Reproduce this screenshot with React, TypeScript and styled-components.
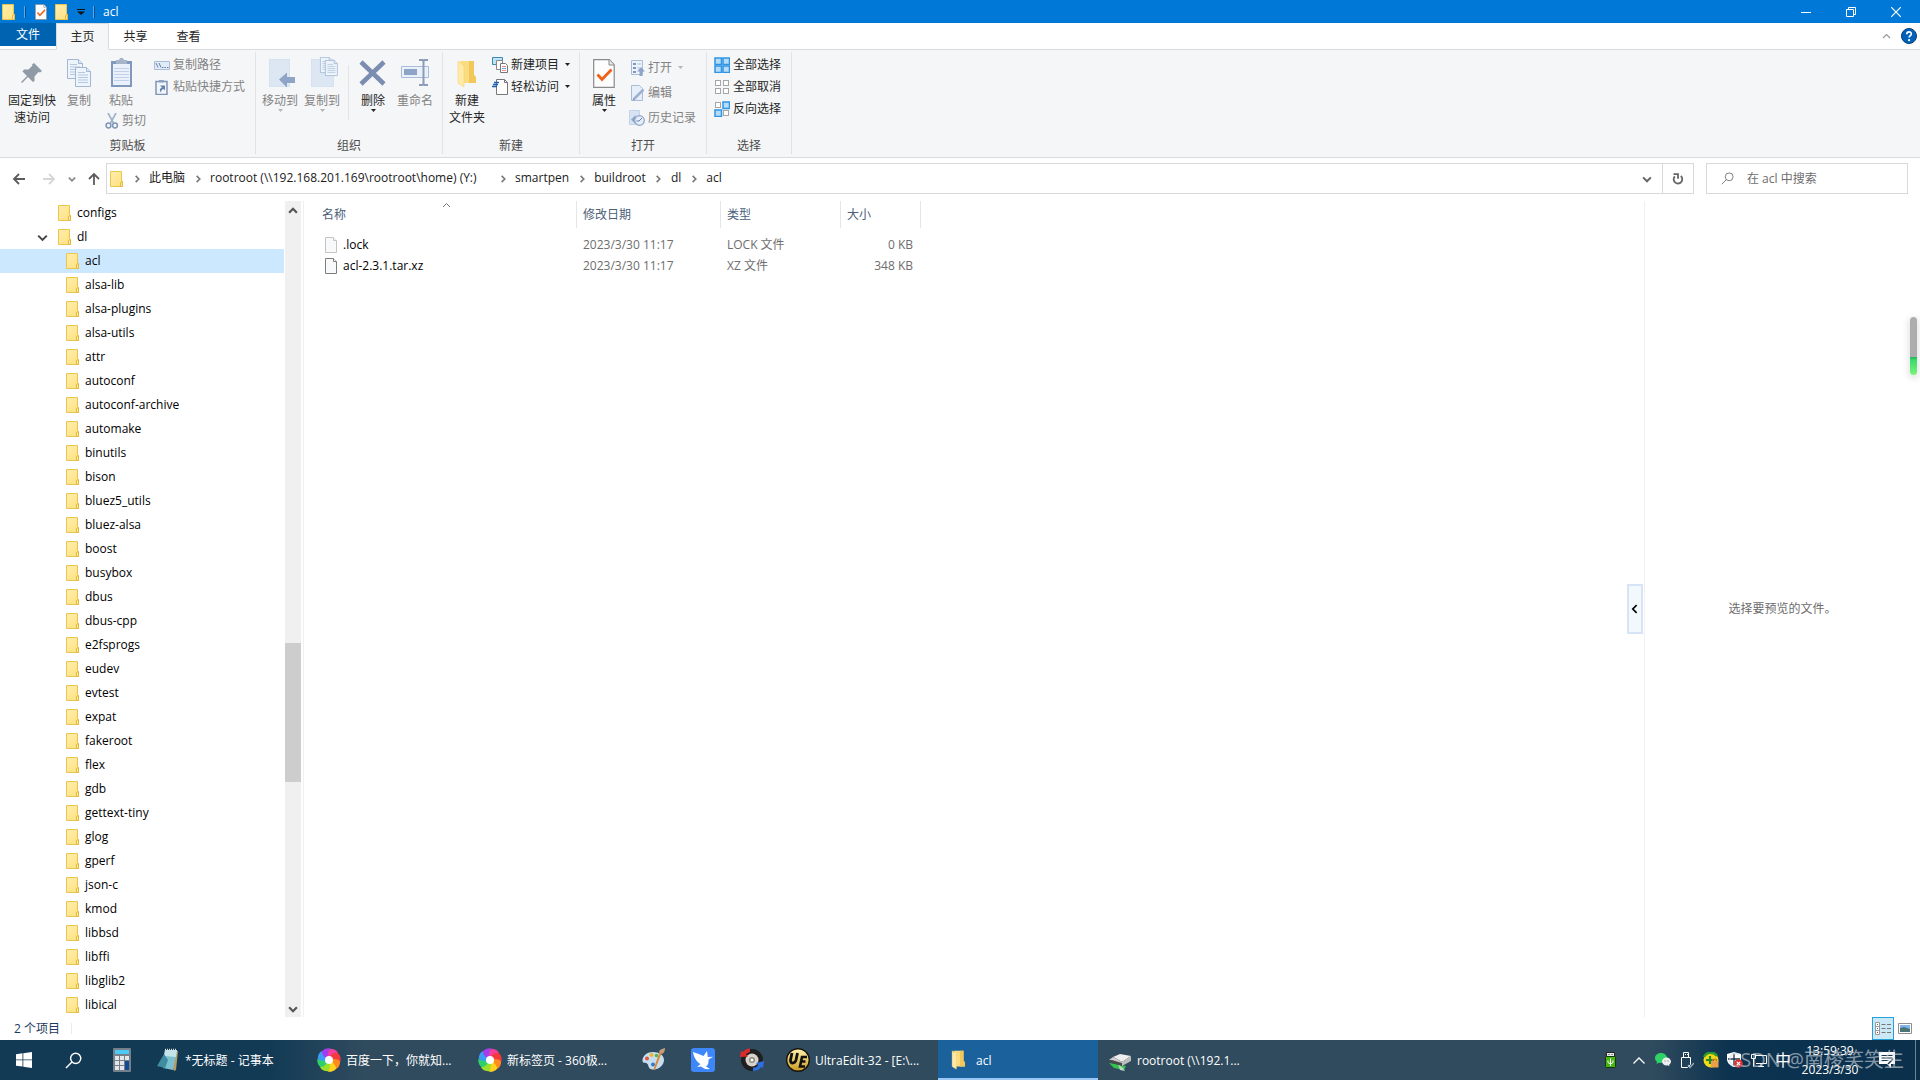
import React from "react";
import styled, { createGlobalStyle, css } from "styled-components";

const Global = createGlobalStyle`
  * { box-sizing: border-box; }
  body { margin: 0; background: #fff; }
  body, button, input {
    font-family: "Open Sans", "Noto Sans CJK SC", sans-serif;
    font-size: 12px;
    line-height: 17px;
    color: #1a1a1a;
  }
  button {
    margin: 0;
    padding: 0;
    border: 0;
    background: none;
    white-space: nowrap;
  }
  svg { display: block; flex: none; }
`;

const Window = styled.div`
  display: flex;
  flex-direction: column;
  height: 100vh;
  overflow: hidden;
`;

/* ---------- title bar ---------- */

const TitleBar = styled.header`
  display: flex;
  align-items: center;
  height: 23px;
  flex: none;
  padding: 0 2px;
  background: #0078d7;
  color: #fff;
`;

const QuickTools = styled.div`
  display: flex;
  align-items: center;
  gap: 8px;
  flex: 1;
`;

const QuickSep = styled.span<{ $gap?: number }>`
  width: 2px;
  height: 12px;
  margin-right: ${(p) => p.$gap ?? 0}px;
  border-left: 1px solid #5aa9e6;
  border-right: 1px solid #00509a;
`;

const Title = styled.span`
  color: #fff;
`;

const CaptionButton = styled.button`
  display: flex;
  align-items: center;
  justify-content: center;
  width: 45px;
  height: 23px;
`;

/* ---------- ribbon ---------- */

const TabBar = styled.nav`
  display: flex;
  height: 27px;
  flex: none;
  border-bottom: 1px solid #dadbdc;
`;

const FileTab = styled.button`
  width: 56px;
  height: 23px;
  background: #0063b1;
  color: #fff;
`;

const Tab = styled.button<{ $active?: boolean }>`
  width: 53px;
  height: 27px;
  color: #262626;
  ${(p) =>
    p.$active &&
    css`
      background: #f5f6f7;
      border: 1px solid #dadbdc;
      border-bottom-color: #f5f6f7;
    `}
`;

const TabEnd = styled.div`
  display: flex;
  align-items: center;
  gap: 10px;
  margin-left: auto;
  padding-right: 3px;
`;

const Ribbon = styled.section`
  display: flex;
  height: 108px;
  flex: none;
  padding: 2px 0 3px;
  background: #f5f6f7;
  border-bottom: 1px solid #dadbdc;
`;

const Group = styled.div<{ $w: number }>`
  display: flex;
  flex-direction: column;
  justify-content: space-between;
  width: ${(p) => p.$w}px;
  border-right: 1px solid #e2e3e4;
`;

const GroupBody = styled.div<{ $pad: number }>`
  display: flex;
  align-items: flex-start;
  padding: 4px 0 0 ${(p) => p.$pad}px;
`;

const GroupLabel = styled.div`
  text-align: center;
  color: #4d4d4d;
`;

const Big = styled.button<{ $w: number; $dim?: boolean }>`
  display: flex;
  flex-direction: column;
  align-items: center;
  width: ${(p) => p.$w}px;
  padding-top: 1px;
  white-space: normal;
  color: ${(p) => (p.$dim ? "#838383" : "#262626")};
  > svg:first-child { margin-bottom: 3px; }
`;

const Stack = styled.div<{ $top?: number; $gap: number; $left?: number }>`
  display: flex;
  flex-direction: column;
  align-items: flex-start;
  gap: ${(p) => p.$gap}px;
  padding: ${(p) => p.$top ?? 0}px 0 0 ${(p) => p.$left ?? 0}px;
`;

const Small = styled.button<{ $dim?: boolean }>`
  display: flex;
  align-items: center;
  gap: 3px;
  color: ${(p) => (p.$dim ? "#838383" : "#262626")};
  > svg:nth-of-type(2) { margin-left: 3px; }
`;

const InnerSep = styled.span`
  width: 1px;
  height: 55px;
  margin: 9px 3px 0 5px;
  background: #e2e3e4;
`;

/* ---------- address row ---------- */

const NavRow = styled.div`
  display: flex;
  align-items: center;
  height: 43px;
  flex: none;
  padding: 0 12px 2px 0;
`;

const NavButton = styled.button<{ $w: number }>`
  display: flex;
  justify-content: center;
  width: ${(p) => p.$w}px;
`;

const Address = styled.div`
  display: flex;
  align-items: center;
  flex: 1;
  height: 31px;
  margin-left: 2px;
  padding-left: 3px;
  border: 1px solid #d9d9d9;
`;

const Crumb = styled.button<{ $drive?: boolean }>`
  min-width: ${(p) => (p.$drive ? "280px" : "0")};
  padding-bottom: 2px;
  text-align: left;
  color: #1a1a1a;
`;

const CrumbSep = styled.span`
  display: flex;
  justify-content: center;
  width: 25px;
`;

const AddressButton = styled.button<{ $line?: boolean }>`
  display: flex;
  align-items: center;
  justify-content: center;
  width: 31px;
  height: 29px;
  border-left: ${(p) => (p.$line ? "1px solid #d9d9d9" : "0")};
`;

const Fill = styled.span`
  flex: 1;
`;

const Search = styled.label`
  display: flex;
  align-items: center;
  gap: 13px;
  width: 202px;
  height: 31px;
  margin-left: 12px;
  padding-left: 14px;
  border: 1px solid #d9d9d9;
  input {
    min-width: 0;
    flex: 1;
    padding: 0;
    border: 0;
    outline: 0;
    background: none;
  }
  input::placeholder { color: #6d6d6d; opacity: 1; }
`;

/* ---------- main area ---------- */

const Main = styled.main`
  display: flex;
  flex: 1;
  min-height: 0;
`;

const Tree = styled.ul`
  flex: none;
  width: 285px;
  margin: 0;
  padding: 0 1px 0 0;
  overflow: hidden;
  list-style: none;
`;

const TreeRow = styled.button<{ $depth: number; $selected?: boolean }>`
  display: flex;
  align-items: center;
  gap: 5px;
  width: 100%;
  height: 24px;
  padding-left: ${(p) => 37 + p.$depth * 8}px;
  background: ${(p) => (p.$selected ? "#cce8ff" : "transparent")};
  color: #000;
`;

const Twist = styled.span`
  width: 16px;
`;

const TreeLabel = styled.span`
  padding-bottom: 2px;
`;

const ScrollBar = styled.div`
  display: flex;
  flex-direction: column;
  align-items: center;
  flex: none;
  width: 16px;
  padding: 5px 0 3px;
  background: #f0f0f0;
`;

const ScrollTrack = styled.div`
  display: grid;
  grid-template-rows: 427fr 139fr 222fr;
  flex: 1;
  width: 100%;
`;

const Thumb = styled.div`
  grid-row: 2;
  background: #cdcdcd;
`;

const ListPane = styled.section`
  flex: 1;
  margin-left: 2px;
  padding-left: 12px;
  border-left: 1px solid #f0f0f0;
  display: flex;
  justify-content: space-between;
`;

const Files = styled.table`
  align-self: flex-start;
  table-layout: fixed;
  width: 605px;
  border-collapse: separate;
  border-spacing: 0;
  color: #6d6d6d;
  th {
    position: relative;
    height: 27px;
    padding: 0 6px;
    border-right: 1px solid #e5e5e5;
    font-weight: 400;
    text-align: left;
    color: #4c607a;
  }
  tbody::before { content: ""; display: block; height: 6px; }
  td { height: 21px; padding: 0 6px; white-space: nowrap; }
  td:last-child { padding-right: 8px; text-align: right; }
`;

const SortMark = styled.span`
  position: absolute;
  top: 0;
  left: 50%;
  margin-left: -4px;
`;

const FileName = styled.span`
  display: flex;
  align-items: center;
  gap: 6px;
  padding-left: 3px;
  color: #000;
`;

const Expander = styled.button`
  align-self: center;
  display: flex;
  align-items: center;
  justify-content: center;
  width: 16px;
  height: 50px;
  margin: 0 1px 0 0;
  border: 2px solid #d5e5f5;
  background: #f3f8fd;
`;

const Preview = styled.aside`
  position: relative;
  display: flex;
  align-items: center;
  justify-content: center;
  flex: none;
  width: 276px;
  padding-bottom: 2px;
  border-left: 1px solid #f0f0f0;
  color: #6d6d6d;
`;

const Meter = styled.div`
  position: absolute;
  top: 116px;
  right: 3px;
  width: 7px;
  height: 58px;
  border-radius: 4px;
  background: linear-gradient(#adadad 40px, #22b455 40px, #3cd96e 43px, #7bf47b);
  box-shadow: 0 2px 6px 2px #e6e6e6;
`;

const StatusBar = styled.footer`
  display: flex;
  align-items: center;
  height: 23px;
  flex: none;
  padding: 0 4px 0 14px;
  color: #1e395b;
`;

const StatusSep = styled.span`
  width: 1px;
  height: 11px;
  margin-left: 11px;
  background: #ececec;
`;

const ViewButton = styled.button<{ $on?: boolean }>`
  display: flex;
  align-items: center;
  justify-content: center;
  width: 22px;
  height: 23px;
  border: ${(p) => (p.$on ? "1px solid #26a0da" : "0")};
  background: ${(p) => (p.$on ? "#cbe8f6" : "none")};
`;

/* ---------- taskbar ---------- */

const TaskBar = styled.footer`
  position: relative;
  display: flex;
  gap: 1px;
  height: 40px;
  flex: none;
  background: linear-gradient(90deg, #123a55 0, #123a55 14%, #304b5e 19%, #304b5e 86%, #0c3350 90%, #0a304c 100%);
`;

const PinButton = styled.button`
  display: flex;
  align-items: center;
  justify-content: center;
  width: 48px;
`;

const Task = styled.button<{ $active?: boolean }>`
  display: flex;
  align-items: center;
  gap: 5px;
  width: 160px;
  padding: 0 0 0 ${(p) => (p.$active ? 8 : 9)}px;
  color: #fff;
  background: ${(p) => (p.$active ? "#1b629c" : "none")} linear-gradient(#99c8f5, #99c8f5) no-repeat bottom /
    ${(p) => (p.$active ? "160px" : "152px")} 2px;
`;

const Tray = styled.div`
  display: flex;
  align-items: center;
  margin-left: auto;
  padding-right: 4px;
`;

const TrayButton = styled.button<{ $w?: number; $size?: number }>`
  display: flex;
  align-items: center;
  justify-content: center;
  width: ${(p) => p.$w ?? 24}px;
  height: 40px;
  font-size: ${(p) => p.$size ?? 12}px;
  color: #fff;
`;

const Clock = styled.button`
  width: 70px;
  line-height: 19px;
  color: #fff;
`;

const DesktopEdge = styled.span`
  width: 1px;
  height: 40px;
  margin-left: 6px;
  background: #6d8494;
`;

const Watermark = styled.span`
  position: absolute;
  right: 16px;
  top: 6px;
  font-size: 20px;
  line-height: 28px;
  color: rgba(215, 220, 225, 0.6);
  pointer-events: none;
`;

/* ---------- drawings ---------- */

const Folder = () => (
  <svg width="14" height="16" viewBox="0 0 14 16">
    <defs>
      <linearGradient id="fold" x1="0" y1="0" x2="1" y2="1">
        <stop offset="0" stopColor="#ffeeb0" />
        <stop offset="1" stopColor="#ffe07c" />
      </linearGradient>
    </defs>
    <path d="M.5.5h11v10h1v5H.5z" fill="url(#fold)" stroke="#eac54f" />
    <path d="M10.500 15.500v-4l2-1v5z" fill="#ffe9a2" stroke="#e5b93c" />
  </svg>
);

const OpenFolder = ({ w = 20, h = 28 }: { w?: number; h?: number }) => (
  <svg width={w} height={h} viewBox="0 0 20 28">
    <path d="M3 1h14v14l2 2v6H5z" fill="#fbdc80" />
    <path d="M12 1h5v14l2 2v6h-7z" fill="#f2c75c" />
    <path d="M1 1l6 5v21l-6-4z" fill="#ffeaa8" stroke="#f3cf6d" strokeWidth=".5" />
  </svg>
);

const CheckDoc = ({ w, h }: { w: number; h: number }) => (
  <svg width={w} height={h} viewBox="0 0 22 29">
    <path d="M.7.7h15.500l5 5v22.600H.7z" fill="#fdfdfd" stroke="#8a8a8a" strokeWidth="1.200" />
    <path d="M16 .7v5.300h5" fill="#e8e8e8" stroke="#8a8a8a" />
    <path d="M4.500 15.500l4.500 5 9.500-10" fill="none" stroke="#f2611a" strokeWidth="2.800" />
  </svg>
);

const Chevron = ({ dir, size = 8, color = "#666", weight = 1.5 }: { dir: "up" | "down" | "right" | "left"; size?: number; color?: string; weight?: number }) => {
  const d = { up: "M1 6l3.500-3.500L8 6", down: "M1 3l3.500 3.500L8 3", right: "M3 1l3.500 3.500L3 8", left: "M6 1L2.500 4.500 6 8" }[dir];
  return (
    <svg width={size} height={size} viewBox="0 0 9 9">
      <path d={d} fill="none" stroke={color} strokeWidth={weight} />
    </svg>
  );
};

const Caret = ({ color = "#222" }: { color?: string }) => (
  <svg width="5" height="3" viewBox="0 0 5 3">
    <path d="M0 0h5L2.500 3z" fill={color} />
  </svg>
);

const Pin = () => (
  <svg width="32" height="32" viewBox="0 0 32 32">
    <path d="M18 6l8 8-2 1.500-1.500-.5-4 4.500v4.500l-1.500 1-5-5L6 26l-1-1 6-6-4.500-4.500 1.500-2h4.500l4-4-.5-1z" fill="#8e9ba6" />
  </svg>
);

const PageLines = ({ x, y, s = 1 }: { x: number; y: number; s?: number }) => (
  <g transform={`translate(${x} ${y}) scale(${s})`}>
    <path d="M.5.5h11l4 4v15H.5z" fill="#eef4fb" stroke="#a3b7d3" />
    <path d="M11.500.5v4h4" fill="#dce8f6" stroke="#a3b7d3" />
    <path d="M3 5.500h7M3 8h10M3 10.500h10M3 13h10M3 15.500h10" stroke="#b4c7e0" />
  </g>
);

const CopyIcon = () => (
  <svg width="32" height="32" viewBox="0 0 32 32">
    <PageLines x={4} y={2} />
    <PageLines x={12} y={10} />
  </svg>
);

const PasteIcon = () => (
  <svg width="32" height="32" viewBox="0 0 32 32">
    <path d="M6 4h21v26H6z" fill="#8198bd" />
    <path d="M8 7h17v21H8z" fill="#eaf1fa" />
    <path d="M11 3h3l1-2h3l1 2h3v4H11z" fill="#a5b4c9" />
    <path d="M9 11.500h15M9 14.500h15M9 17.500h15M9 20.500h15M9 23.500h15" stroke="#c0d2ea" />
  </svg>
);

const ScissorsIcon = () => (
  <svg width="14" height="16" viewBox="0 0 14 16">
    <path d="M3 0l5.500 10M11 0L5.500 10" stroke="#9db0ca" strokeWidth="1.600" />
    <circle cx="3.500" cy="12.500" r="2.400" fill="none" stroke="#7f95b8" strokeWidth="1.500" />
    <circle cx="10" cy="12.500" r="2.400" fill="none" stroke="#7f95b8" strokeWidth="1.500" />
  </svg>
);

const PathIcon = () => (
  <svg width="16" height="16" viewBox="0 0 16 16">
    <path d="M.5 4.500h15v8H.5z" fill="#e2ecf8" stroke="#a9bcd8" />
    <path d="M2 6l2 4.500M5 6l2 4.500" stroke="#6682ab" />
    <path d="M8 10.500h1.500M10.500 10.500H12M13 10.500h1.500" stroke="#6682ab" />
  </svg>
);

const ShortcutIcon = () => (
  <svg width="16" height="16" viewBox="0 0 16 16">
    <path d="M2 2.500h11v13H2z" fill="#f2f6fb" stroke="#7f95b8" strokeWidth="1.500" />
    <path d="M5 1h5v2.500H5z" fill="#8ea2c0" />
    <path d="M6 6.500h5v5L9.500 10C7.500 10.500 7 12 7 13.500 5 11 6 9 8 8.500z" fill="#6682ab" />
  </svg>
);

const MoveIcon = () => (
  <svg width="32" height="32" viewBox="0 0 32 32">
    <path d="M5 2h21v28H5z" fill="#d7e2f1" />
    <path d="M6 3h19v26H6z" fill="#dde7f4" />
    <path d="M15 22.500l8-7v4.500h8v6h-8v4.500z" fill="#8fa5c5" />
  </svg>
);

const CopyToIcon = () => (
  <svg width="32" height="32" viewBox="0 0 32 32">
    <path d="M5 2h23v28H5z" fill="#d7e2f1" />
    <path d="M6 3h21v26H6z" fill="#dde7f4" />
    <PageLines x={14} y={0} s={0.8} />
    <PageLines x={19} y={3} s={0.8} />
  </svg>
);

const DeleteIcon = () => (
  <svg width="32" height="32" viewBox="0 0 32 32">
    <path d="M4 5l23 22M27 5L4 27" stroke="#7b8db0" strokeWidth="4.500" />
  </svg>
);

const RenameIcon = () => (
  <svg width="32" height="32" viewBox="0 0 32 32">
    <path d="M2.500 9.500h27v11h-27z" fill="#eaf1fa" stroke="#a9bcd8" />
    <path d="M5 12h13v6H5z" fill="#8ea5c8" />
    <path d="M24.500 4v24M20 3h3.500l1 1 1-1H29M20 28h3.500l1-1 1 1H29" fill="none" stroke="#8b9cb8" strokeWidth="2" />
  </svg>
);

const NewItemIcon = () => (
  <svg width="16" height="16" viewBox="0 0 16 16">
    <path d="M.5.5h10v7H.5z" fill="#bfe3f3" stroke="#3c8bb0" />
    <path d="M4.500 3.500h6v9h-6z" fill="#fff" stroke="#888" />
    <path d="M8.500 6.500h5l2 2v7h-7z" fill="#fff" stroke="#777" />
    <path d="M10 9.500h4M10 13.500h4" stroke="#e48a8a" />
    <path d="M10 11.500h4" stroke="#7aa7dd" />
  </svg>
);

const EasyAccessIcon = () => (
  <svg width="16" height="16" viewBox="0 0 16 16">
    <path d="M4.500.5h8l3 3v12h-11z" fill="#fff" stroke="#777" />
    <path d="M12.500.5v3h3" fill="none" stroke="#777" />
    <path d="M2 3.500h5M1 5.500h5M0 7.500h5" stroke="#1d63ad" strokeWidth="1.300" />
  </svg>
);

const OpenIcon = () => (
  <svg width="16" height="16" viewBox="0 0 16 16">
    <path d="M2.500.5h11v14h-11z" fill="#edf3fb" stroke="#a9bcd8" />
    <path d="M4 3h3v2H4zM4 7h3v2H4zM4 11h3v2H4z" fill="#7f98bf" />
    <path d="M8.500 4H12M8.500 8H11" stroke="#a9bcd8" />
    <path d="M12 7l4 4.500h-2.500V16h-3v-4.500H8z" fill="#8ea5c8" />
  </svg>
);

const EditIcon = () => (
  <svg width="16" height="16" viewBox="0 0 16 16">
    <path d="M2.500.5h8l3 3v12h-11z" fill="#e6eef9" stroke="#a9bcd8" />
    <path d="M14.500 4.500l-9 9" stroke="#9db2d2" strokeWidth="2.500" />
    <path d="M3.500 15.500l1-3 2 2z" fill="#7f95b8" />
  </svg>
);

const HistoryIcon = () => (
  <svg width="16" height="16" viewBox="0 0 16 16">
    <path d="M.5.5h10v14H.500z" fill="#d7e3f3" stroke="#c3d2e8" />
    <path d="M2 9.500L6.500 5v9z" fill="#8ea5c8" />
    <circle cx="10.500" cy="10.500" r="4.800" fill="#e4ecf6" stroke="#8ea5c8" strokeWidth="1.200" />
    <path d="M10 11l3-3M10 11H7.500" stroke="#6682ab" />
  </svg>
);

const SelectIcon = ({ on }: { on: boolean[] }) => (
  <svg width="16" height="16" viewBox="0 0 16 16">
    {[[1, 1], [9, 1], [1, 9], [9, 9]].map(([x, y], i) =>
      on[i] ? (
        <rect key={i} x={x} y={y} width="6.500" height="6.500" fill="#b5dcf8" stroke="#2e94e4" strokeWidth="1.500" />
      ) : (
        <rect key={i} x={x + 0.5} y={y + 0.5} width="5" height="5" fill="#fff" stroke="#a6a6a6" />
      )
    )}
  </svg>
);

const Arrow = ({ color, up }: { color: string; up?: boolean }) => (
  <svg width="14" height="14" viewBox="0 0 14 14">
    <path d={up ? "M7 13V2M2 7l5-5 5 5" : "M13 7H2M7 2L2 7l5 5"} fill="none" stroke={color} strokeWidth="1.800" />
  </svg>
);

const ForwardArrow = () => (
  <svg width="14" height="14" viewBox="0 0 14 14">
    <path d="M1 7h11M7 2l5 5-5 5" fill="none" stroke="#d6d6d6" strokeWidth="1.800" />
  </svg>
);

const Refresh = () => (
  <svg width="12" height="12" viewBox="0 0 12 12">
    <path d="M8.800 3A4.300 4.300 0 1 1 2.800 3.300" fill="none" stroke="#666" strokeWidth="1.800" />
    <path d="M1.500 1.200h4.500v4.500" fill="none" stroke="#666" strokeWidth="1.800" />
  </svg>
);

const Lens = ({ size, color, w = 1 }: { size: number; color: string; w?: number }) => (
  <svg width={size} height={size} viewBox="0 0 14 14">
    <circle cx="8.800" cy="5.200" r="4.200" fill="none" stroke={color} strokeWidth={w} />
    <path d="M5.700 8.300L.8 13.200" stroke={color} strokeWidth={w} />
  </svg>
);

const PageIcon = ({ faded }: { faded?: boolean }) => (
  <svg width="12" height="16" viewBox="0 0 12 16">
    <path d="M.5.5h8l3 3v12H.5z" fill="#f8f9fa" stroke={faded ? "#c4c4c4" : "#7d7d7d"} />
    <path d="M8.500.5v3h3" fill="#fff" stroke={faded ? "#c4c4c4" : "#7d7d7d"} />
  </svg>
);

const Help = () => (
  <svg width="16" height="16" viewBox="0 0 16 16">
    <circle cx="8" cy="8" r="7.500" fill="#0063b9" stroke="#0b3c74" />
    <path d="M5.800 6.200c0-3.200 4.600-3 4.500-.3 0 1.700-2.200 1.700-2.200 3.700" fill="none" stroke="#fff" strokeWidth="1.700" />
    <circle cx="8.100" cy="12.200" r="1.100" fill="#fff" />
  </svg>
);

const DetailsIcon = () => (
  <svg width="17" height="13" viewBox="0 0 17 13">
    <path d="M.5.5h4v12h-4zM.5 4.500h4M.5 8.500h4" fill="#fff" stroke="#9a9a9a" />
    <path d="M2 2h1v1H2z" fill="#2c8a4b" />
    <path d="M2 6h1v1H2z" fill="#2c62c9" />
    <path d="M2 10h1v1H2z" fill="#d42a2a" />
    <path d="M6.500 2.500h4M12 2.500h4M6.500 6.500h4M12 6.500h4M6.500 10.500h4M12 10.500h4" stroke="#777" />
  </svg>
);

const ThumbsIcon = () => (
  <svg width="14" height="11" viewBox="0 0 14 11">
    <path d="M.5.5h13v10H.5z" fill="#fff" stroke="#8f8f8f" />
    <path d="M2 2h10v4H2z" fill="#7fb4f0" />
    <path d="M2 5l4-1 6 2v3H2z" fill="#4b7474" />
  </svg>
);

const WinLogo = () => (
  <svg width="16" height="16" viewBox="0 0 16 16">
    <path d="M0 2.200L6.500 1.300v6.200H0zM7.300 1.200L16 0v7.500H7.300zM0 8.300h6.500v6.300L0 13.700zM7.300 8.300H16V16l-8.700-1.200z" fill="#fff" />
  </svg>
);

const CalcIcon = () => (
  <svg width="18" height="24" viewBox="0 0 18 24">
    <rect width="18" height="24" rx="1" fill="#75808a" />
    <path d="M2 2h14v4H2z" fill="#4cc9f7" />
    <path d="M2 8h4v4H2zM7 8h4v4H7zM12 8h4v4h-4zM2 13h4v4H2zM7 13h4v4H7zM2 18h4v4H2zM7 18h4v4H7z" fill="#e3e7ea" />
    <path d="M12 13h4v9h-4z" fill="#134a92" />
  </svg>
);

const NotepadIcon = () => (
  <svg width="24" height="24" viewBox="0 0 24 24">
    <path d="M9 2l13 1-2 19-2 1z" fill="#b79b66" />
    <path d="M9 2h12l-4 20-10-2z" fill="#7cbfd0" />
    <path d="M9 2h12l-1 7-12-1z" fill="#c4e4ea" />
    <path d="M8 6l-7 12 8 2 3-8z" fill="#3f8ba0" />
    <path d="M9 1.500h12" stroke="#dadada" strokeWidth="1.500" strokeDasharray="1 1" />
  </svg>
);

const wheel = ["#f0409a", "#a43df0", "#3c9df5", "#2fd06a", "#9be02a", "#ffd21f", "#ff8a1f", "#f5383c"];
const WheelIcon = () => (
  <svg width="24" height="24" viewBox="0 0 24 24">
    {wheel.map((c, i) => (
      <path key={c} d="M12 12C9 8 10 3 13 .8c4 0 6.500 1.500 8 4C17 5 14 8 12 12z" fill={c} transform={`rotate(${-i * 45} 12 12)`} />
    ))}
    <circle cx="12" cy="12" r="4" fill="#fff" />
  </svg>
);

const PaletteIcon = () => (
  <svg width="24" height="24" viewBox="0 0 24 24">
    <path d="M11 4C4 4 0 9 .5 13c.5 3 3.500 1 5 3s.5 5 5 5.500C17 22 22 17 22 12s-5-8-11-8z" fill="#c5dff0" />
    <circle cx="5" cy="10.500" r="2" fill="#e5533c" />
    <circle cx="9.500" cy="7" r="2" fill="#f1b52f" />
    <circle cx="14.500" cy="7.500" r="1.800" fill="#56b356" />
    <circle cx="11" cy="16.500" r="2" fill="#3878c9" />
    <path d="M20 4l-7 18-1.500-1L18 3z" fill="#dd8a38" />
    <path d="M17 4c1-3 3-3 6-4 0 3-1 5-3 6z" fill="#c79d73" />
  </svg>
);

const BirdIcon = () => (
  <svg width="24" height="24" viewBox="0 0 24 24">
    <rect width="24" height="24" rx="3" fill="#3d87fb" />
    <path d="M2 4c4 1.500 7.500 2.500 10.500 4L16 3l.8 6 5.200-.3-4.500 2.800c.3 3.500-.5 5.500-2.500 7l4 2.500c-4 .5-7-.5-9-2.500l-4 .5 3.500-3C6 14 3 10 2 4z" fill="#fff" />
  </svg>
);

const RecorderIcon = () => (
  <svg width="24" height="24" viewBox="0 0 24 24">
    <circle cx="12" cy="12" r="11" fill="#1f1f22" />
    <circle cx="12" cy="12" r="6.500" fill="#d8d4ca" />
    <circle cx="12" cy="12" r="3" fill="#8e8a80" />
    <circle cx="12" cy="12" r="1.500" fill="#fff" />
    <path d="M0 9l1-6 2 1c2-2.500 4-3.500 7-3.500V4C8 4.500 7 5 6 6.500l2 2z" fill="#e12828" />
    <path d="M24 13l-1 7-2-1c-2 3-5 4-8 4v-3.500c3 0 4-.5 5-2.500l-2-2z" fill="#2e6fe0" />
  </svg>
);

const UltraIcon = () => (
  <svg width="24" height="24" viewBox="0 0 24 24">
    <defs>
      <linearGradient id="gold" x1="0" y1="0" x2="0" y2="1">
        <stop offset="0" stopColor="#fff3b0" />
        <stop offset="1" stopColor="#c99a1e" />
      </linearGradient>
    </defs>
    <circle cx="12" cy="12" r="11.300" fill="url(#gold)" stroke="#17120a" strokeWidth="1.400" />
    <path d="M6 5L4.500 12c-.5 4 4.500 4 5.500 0l1.500-7" fill="none" stroke="#111" strokeWidth="2.800" />
    <path d="M21 9h-5l-2 9.500h5M15 13.500h4.500" fill="none" stroke="#111" strokeWidth="2.600" />
  </svg>
);

const DriveIcon = () => (
  <svg width="24" height="24" viewBox="0 0 24 24">
    <path d="M1 15l5 5 10 2 2-4z" fill="#35c24f" />
    <path d="M10 16l5 4 2 3-5-1z" fill="#b8d8bd" />
    <path d="M5 9l7-3 11 2-9 6z" fill="#ededed" />
    <path d="M5 9l9 5v4L1 14z" fill="#4a4a4a" />
    <path d="M14 14l9-6v5l-9 5z" fill="#bdbdbd" />
    <path d="M1 12l4-3 9 5v1L4 12z" fill="#cfcfcf" />
  </svg>
);

const UsbGreen = () => (
  <svg width="12" height="16" viewBox="0 0 12 16">
    <path d="M1.500.5h8v4h-8z" fill="#e9e9e9" stroke="#222" />
    <path d="M3.500 2h1v1h-1zM6.500 2h1v1h-1z" fill="#333" />
    <rect x=".5" y="4.500" width="10" height="11" rx="1" fill="#45b512" stroke="#14380a" />
    <path d="M5.500 6.500V14M3 8.500v2l2.500 1.500L8 10.500v-2" fill="none" stroke="#fff" />
  </svg>
);

const WeChat = () => (
  <svg width="16" height="14" viewBox="0 0 16 14">
    <path d="M6 0C2.500 0 0 2.300 0 5c0 1.600.8 3 2 3.800L1.500 11l2.300-1.300C8 10.500 12 8.500 12 5c0-2.700-2.600-5-6-5z" fill="#2fd267" />
    <path d="M11.500 4.500C9 4.500 7 6.200 7 8.500s2 4 4.500 4l1.300-.2 1.700 1-.4-1.600C15.300 11 16 9.800 16 8.500c0-2.300-2-4-4.500-4z" fill="#eee" />
    <circle cx="10" cy="8" r=".7" fill="#999" />
    <circle cx="13" cy="8" r=".7" fill="#999" />
  </svg>
);

const UsbSafe = () => (
  <svg width="13" height="17" viewBox="0 0 13 17">
    <path d="M2.500 5V.5h5V5M.5 5.500h9v7l-3 3h-6z" fill="none" stroke="#fff" />
    <path d="M4 2h1v1H4zM6 2h1v1H6z" fill="#fff" />
    <path d="M7 13l2 2.500 4-4.500" fill="none" stroke="#9fb0bc" strokeWidth="1.300" />
  </svg>
);

const GuardIcon = () => (
  <svg width="16" height="16" viewBox="0 0 16 16">
    <circle cx="8" cy="8" r="7.500" fill="#f6d816" />
    <path d="M1 5a7.500 7.500 0 0 1 13-1" fill="none" stroke="#2e9b30" strokeWidth="2.500" />
    <path d="M7 4v8M3 8h8" stroke="#228b22" strokeWidth="2.200" />
    <path d="M9.500 9V7.500h4V9" fill="none" stroke="#c07b2c" strokeWidth="1.300" />
    <path d="M8 9h7.500v6.500H8z" fill="#e8a04a" />
  </svg>
);

const DefenderIcon = () => (
  <svg width="16" height="16" viewBox="0 0 16 16">
    <path d="M7 0l7 2v5c0 4-3 6.500-7 8-4-1.500-7-4-7-8V2z" fill="#fff" />
    <path d="M7 1.500V14M1 7h12" stroke="#14344b" strokeWidth="1.300" />
    <circle cx="11.500" cy="11.500" r="4.300" fill="#dc3232" />
    <path d="M9.800 9.800l3.400 3.400M13.200 9.800l-3.400 3.400" stroke="#fff" strokeWidth="1.200" />
  </svg>
);

const NetworkIcon = () => (
  <svg width="16" height="14" viewBox="0 0 16 14">
    <path d="M5 2.500h10.500v8H5M7 13.500h6M10 11v2.500M.5 1.500h4v4h-4zM2.500 5.500v8" fill="none" stroke="#fff" />
  </svg>
);

const NoticeIcon = () => (
  <svg width="16" height="16" viewBox="0 0 16 16">
    <path d="M0 0h16v12h-4v4l-4-4H0z" fill="#fff" />
    <path d="M2.500 3.500h11M2.500 6h11M2.500 8.500h7" stroke="#14344b" />
    <path d="M9 12l5-5" stroke="#14344b" strokeWidth="1.500" />
  </svg>
);

/* ---------- data ---------- */

const drive = "rootroot (\\\\192.168.201.169\\rootroot\\home) (Y:)";
const crumbs = ["此电脑", drive, "smartpen", "buildroot", "dl", "acl"];

const packages = [
  "acl", "alsa-lib", "alsa-plugins", "alsa-utils", "attr", "autoconf", "autoconf-archive", "automake",
  "binutils", "bison", "bluez5_utils", "bluez-alsa", "boost", "busybox", "dbus", "dbus-cpp", "e2fsprogs",
  "eudev", "evtest", "expat", "fakeroot", "flex", "gdb", "gettext-tiny", "glog", "gperf", "json-c", "kmod",
  "libbsd", "libffi", "libglib2", "libical",
];

const tree = [
  { name: "configs", depth: 0, open: false },
  { name: "dl", depth: 0, open: true },
  ...packages.map((name) => ({ name, depth: 1, open: false })),
];

const files = [
  { name: ".lock", date: "2023/3/30 11:17", type: "LOCK 文件", size: "0 KB", faded: true },
  { name: "acl-2.3.1.tar.xz", date: "2023/3/30 11:17", type: "XZ 文件", size: "348 KB", faded: false },
];

export default function App() {
  return (
    <>
      <Global />
      <Window>
        <TitleBar>
          <QuickTools>
            <Folder />
            <QuickSep $gap={1} />
            <CheckDoc w={12} h={16} />
            <Folder />
            <svg width="8" height="6" viewBox="0 0 8 6">
              <path d="M0 .5h8" stroke="#111" />
              <path d="M0 2.500h8L4 6z" fill="#111" />
            </svg>
            <QuickSep />
            <Title>acl</Title>
          </QuickTools>
          <CaptionButton aria-label="最小化">
            <svg width="10" height="10"><path d="M0 5.500h10" stroke="#fff" /></svg>
          </CaptionButton>
          <CaptionButton aria-label="还原">
            <svg width="10" height="10"><path d="M.5 2.500h7v7h-7zM2.500 2.500v-2h7v7h-2" fill="none" stroke="#fff" /></svg>
          </CaptionButton>
          <CaptionButton aria-label="关闭">
            <svg width="10" height="10"><path d="M0 0l10 10M10 0L0 10" stroke="#fff" strokeWidth="1.200" /></svg>
          </CaptionButton>
        </TitleBar>

        <TabBar>
          <FileTab>文件</FileTab>
          <Tab $active>主页</Tab>
          <Tab>共享</Tab>
          <Tab>查看</Tab>
          <TabEnd>
            <Chevron dir="up" size={9} color="#999" weight={1.2} />
            <Help />
          </TabEnd>
        </TabBar>

        <Ribbon>
          <Group $w={256}>
            <GroupBody $pad={6}>
              <Big $w={52}><Pin />固定到快<br />速访问</Big>
              <Big $w={42} $dim><CopyIcon />复制</Big>
              <Stack $gap={3} $left={5}>
                <Big $w={32} $dim><PasteIcon />粘贴</Big>
                <Small $dim><ScissorsIcon />剪切</Small>
              </Stack>
              <Stack $gap={5} $left={8}>
                <Small $dim><PathIcon />复制路径</Small>
                <Small $dim><ShortcutIcon />粘贴快捷方式</Small>
              </Stack>
            </GroupBody>
            <GroupLabel>剪贴板</GroupLabel>
          </Group>

          <Group $w={187}>
            <GroupBody $pad={3}>
              <Big $w={42} $dim><MoveIcon />移动到<Caret color="#b5b5b5" /></Big>
              <Big $w={42} $dim><CopyToIcon />复制到<Caret color="#b5b5b5" /></Big>
              <InnerSep />
              <Big $w={42}><DeleteIcon />删除<Caret /></Big>
              <Big $w={42} $dim><RenameIcon />重命名</Big>
            </GroupBody>
            <GroupLabel>组织</GroupLabel>
          </Group>

          <Group $w={137}>
            <GroupBody $pad={3}>
              <Big $w={42}>
                <svg width="32" height="32" viewBox="0 0 32 32"><g transform="translate(6 3)"><OpenFolder /></g></svg>
                新建<br />文件夹
              </Big>
              <Stack $gap={5} $left={4}>
                <Small><NewItemIcon />新建项目<Caret /></Small>
                <Small><EasyAccessIcon />轻松访问<Caret /></Small>
              </Stack>
            </GroupBody>
            <GroupLabel>新建</GroupLabel>
          </Group>

          <Group $w={127}>
            <GroupBody $pad={3}>
              <Big $w={42}>
                <svg width="32" height="32" viewBox="0 0 32 32"><g transform="translate(5 2)"><CheckDoc w={22} h={29} /></g></svg>
                属性<Caret />
              </Big>
              <Stack $gap={8} $top={3} $left={4}>
                <Small $dim><OpenIcon />打开<Caret color="#b5b5b5" /></Small>
                <Small $dim><EditIcon />编辑</Small>
                <Small $dim><HistoryIcon />历史记录</Small>
              </Stack>
            </GroupBody>
            <GroupLabel>打开</GroupLabel>
          </Group>

          <Group $w={85}>
            <GroupBody $pad={7}>
              <Stack $gap={5}>
                <Small><SelectIcon on={[true, true, true, true]} />全部选择</Small>
                <Small><SelectIcon on={[false, false, false, false]} />全部取消</Small>
                <Small><SelectIcon on={[false, true, true, false]} />反向选择</Small>
              </Stack>
            </GroupBody>
            <GroupLabel>选择</GroupLabel>
          </Group>
        </Ribbon>

        <NavRow>
          <NavButton $w={38} aria-label="后退"><Arrow color="#5c5c5c" /></NavButton>
          <NavButton $w={22} aria-label="前进"><ForwardArrow /></NavButton>
          <NavButton $w={24} aria-label="最近"><Chevron dir="down" color="#888" weight={2} /></NavButton>
          <NavButton $w={20} aria-label="向上"><Arrow color="#5c5c5c" up /></NavButton>
          <Address>
            <Folder />
            {crumbs.map((c) => (
              <React.Fragment key={c}>
                <CrumbSep><Chevron dir="right" color="#777" weight={1.8} /></CrumbSep>
                <Crumb $drive={c === drive}>{c}</Crumb>
              </React.Fragment>
            ))}
            <Fill />
            <AddressButton aria-label="展开"><Chevron dir="down" size={10} color="#666" weight={1.8} /></AddressButton>
            <AddressButton $line aria-label="刷新"><Refresh /></AddressButton>
          </Address>
          <Search>
            <Lens size={13} color="#777" />
            <input type="text" placeholder="在 acl 中搜索" aria-label="搜索" />
          </Search>
        </NavRow>

        <Main>
          <Tree>
            {tree.map((n) => (
              <li key={n.name}>
                <TreeRow $depth={n.depth} $selected={n.name === "acl"}>
                  <Twist>{n.open && <Chevron dir="down" size={11} color="#444" weight={1.6} />}</Twist>
                  <Folder />
                  <TreeLabel>{n.name}</TreeLabel>
                </TreeRow>
              </li>
            ))}
          </Tree>
          <ScrollBar>
            <Chevron dir="up" size={10} color="#555" weight={2} />
            <ScrollTrack><Thumb /></ScrollTrack>
            <Chevron dir="down" size={10} color="#555" weight={2} />
          </ScrollBar>
          <ListPane>
            <Files>
              <colgroup>
                <col style={{ width: 261 }} /><col style={{ width: 144 }} /><col style={{ width: 120 }} /><col style={{ width: 80 }} />
              </colgroup>
              <thead>
                <tr>
                  <th>名称<SortMark><Chevron dir="up" size={9} color="#777" weight={1} /></SortMark></th>
                  <th>修改日期</th>
                  <th>类型</th>
                  <th>大小</th>
                </tr>
              </thead>
              <tbody>
                {files.map((f) => (
                  <tr key={f.name}>
                    <td><FileName><PageIcon faded={f.faded} />{f.name}</FileName></td>
                    <td>{f.date}</td>
                    <td>{f.type}</td>
                    <td>{f.size}</td>
                  </tr>
                ))}
              </tbody>
            </Files>
            <Expander aria-label="展开预览"><Chevron dir="left" size={10} color="#000" weight={1.5} /></Expander>
          </ListPane>
          <Preview>
            选择要预览的文件。
            <Meter />
          </Preview>
        </Main>

        <StatusBar>
          2 个项目
          <StatusSep />
          <Fill />
          <ViewButton $on aria-label="详细信息"><DetailsIcon /></ViewButton>
          <ViewButton aria-label="大缩略图"><ThumbsIcon /></ViewButton>
        </StatusBar>

        <TaskBar>
          <PinButton aria-label="开始"><WinLogo /></PinButton>
          <PinButton aria-label="搜索"><Lens size={17} color="#fff" w={1.2} /></PinButton>
          <PinButton aria-label="计算器"><CalcIcon /></PinButton>
          <Task><NotepadIcon />*无标题 - 记事本</Task>
          <Task><WheelIcon />百度一下，你就知...</Task>
          <Task><WheelIcon />新标签页 - 360极...</Task>
          <PinButton aria-label="画图"><PaletteIcon /></PinButton>
          <PinButton aria-label="迅雷"><BirdIcon /></PinButton>
          <PinButton aria-label="录像"><RecorderIcon /></PinButton>
          <Task><UltraIcon />UltraEdit-32 - [E:\...</Task>
          <Task $active><OpenFolder w={25} h={20} />acl</Task>
          <Task><DriveIcon />rootroot (\\192.1...</Task>
          <Tray>
            <TrayButton $w={32} aria-label="U盘"><UsbGreen /></TrayButton>
            <TrayButton aria-label="显示隐藏的图标">
              <svg width="12" height="7" viewBox="0 0 12 7"><path d="M.5 6.500L6 1l5.500 5.500" fill="none" stroke="#fff" strokeWidth="1.300" /></svg>
            </TrayButton>
            <TrayButton aria-label="微信"><WeChat /></TrayButton>
            <TrayButton aria-label="安全删除硬件"><UsbSafe /></TrayButton>
            <TrayButton aria-label="安全卫士"><GuardIcon /></TrayButton>
            <TrayButton aria-label="安全中心"><DefenderIcon /></TrayButton>
            <TrayButton aria-label="网络"><NetworkIcon /></TrayButton>
            <TrayButton $size={16}>中</TrayButton>
            <Clock>13:59:39<br />2023/3/30</Clock>
            <TrayButton $w={44} aria-label="通知"><NoticeIcon /></TrayButton>
            <DesktopEdge />
          </Tray>
          <Watermark>CSDN @南棱笑笑生</Watermark>
        </TaskBar>
      </Window>
    </>
  );
}
